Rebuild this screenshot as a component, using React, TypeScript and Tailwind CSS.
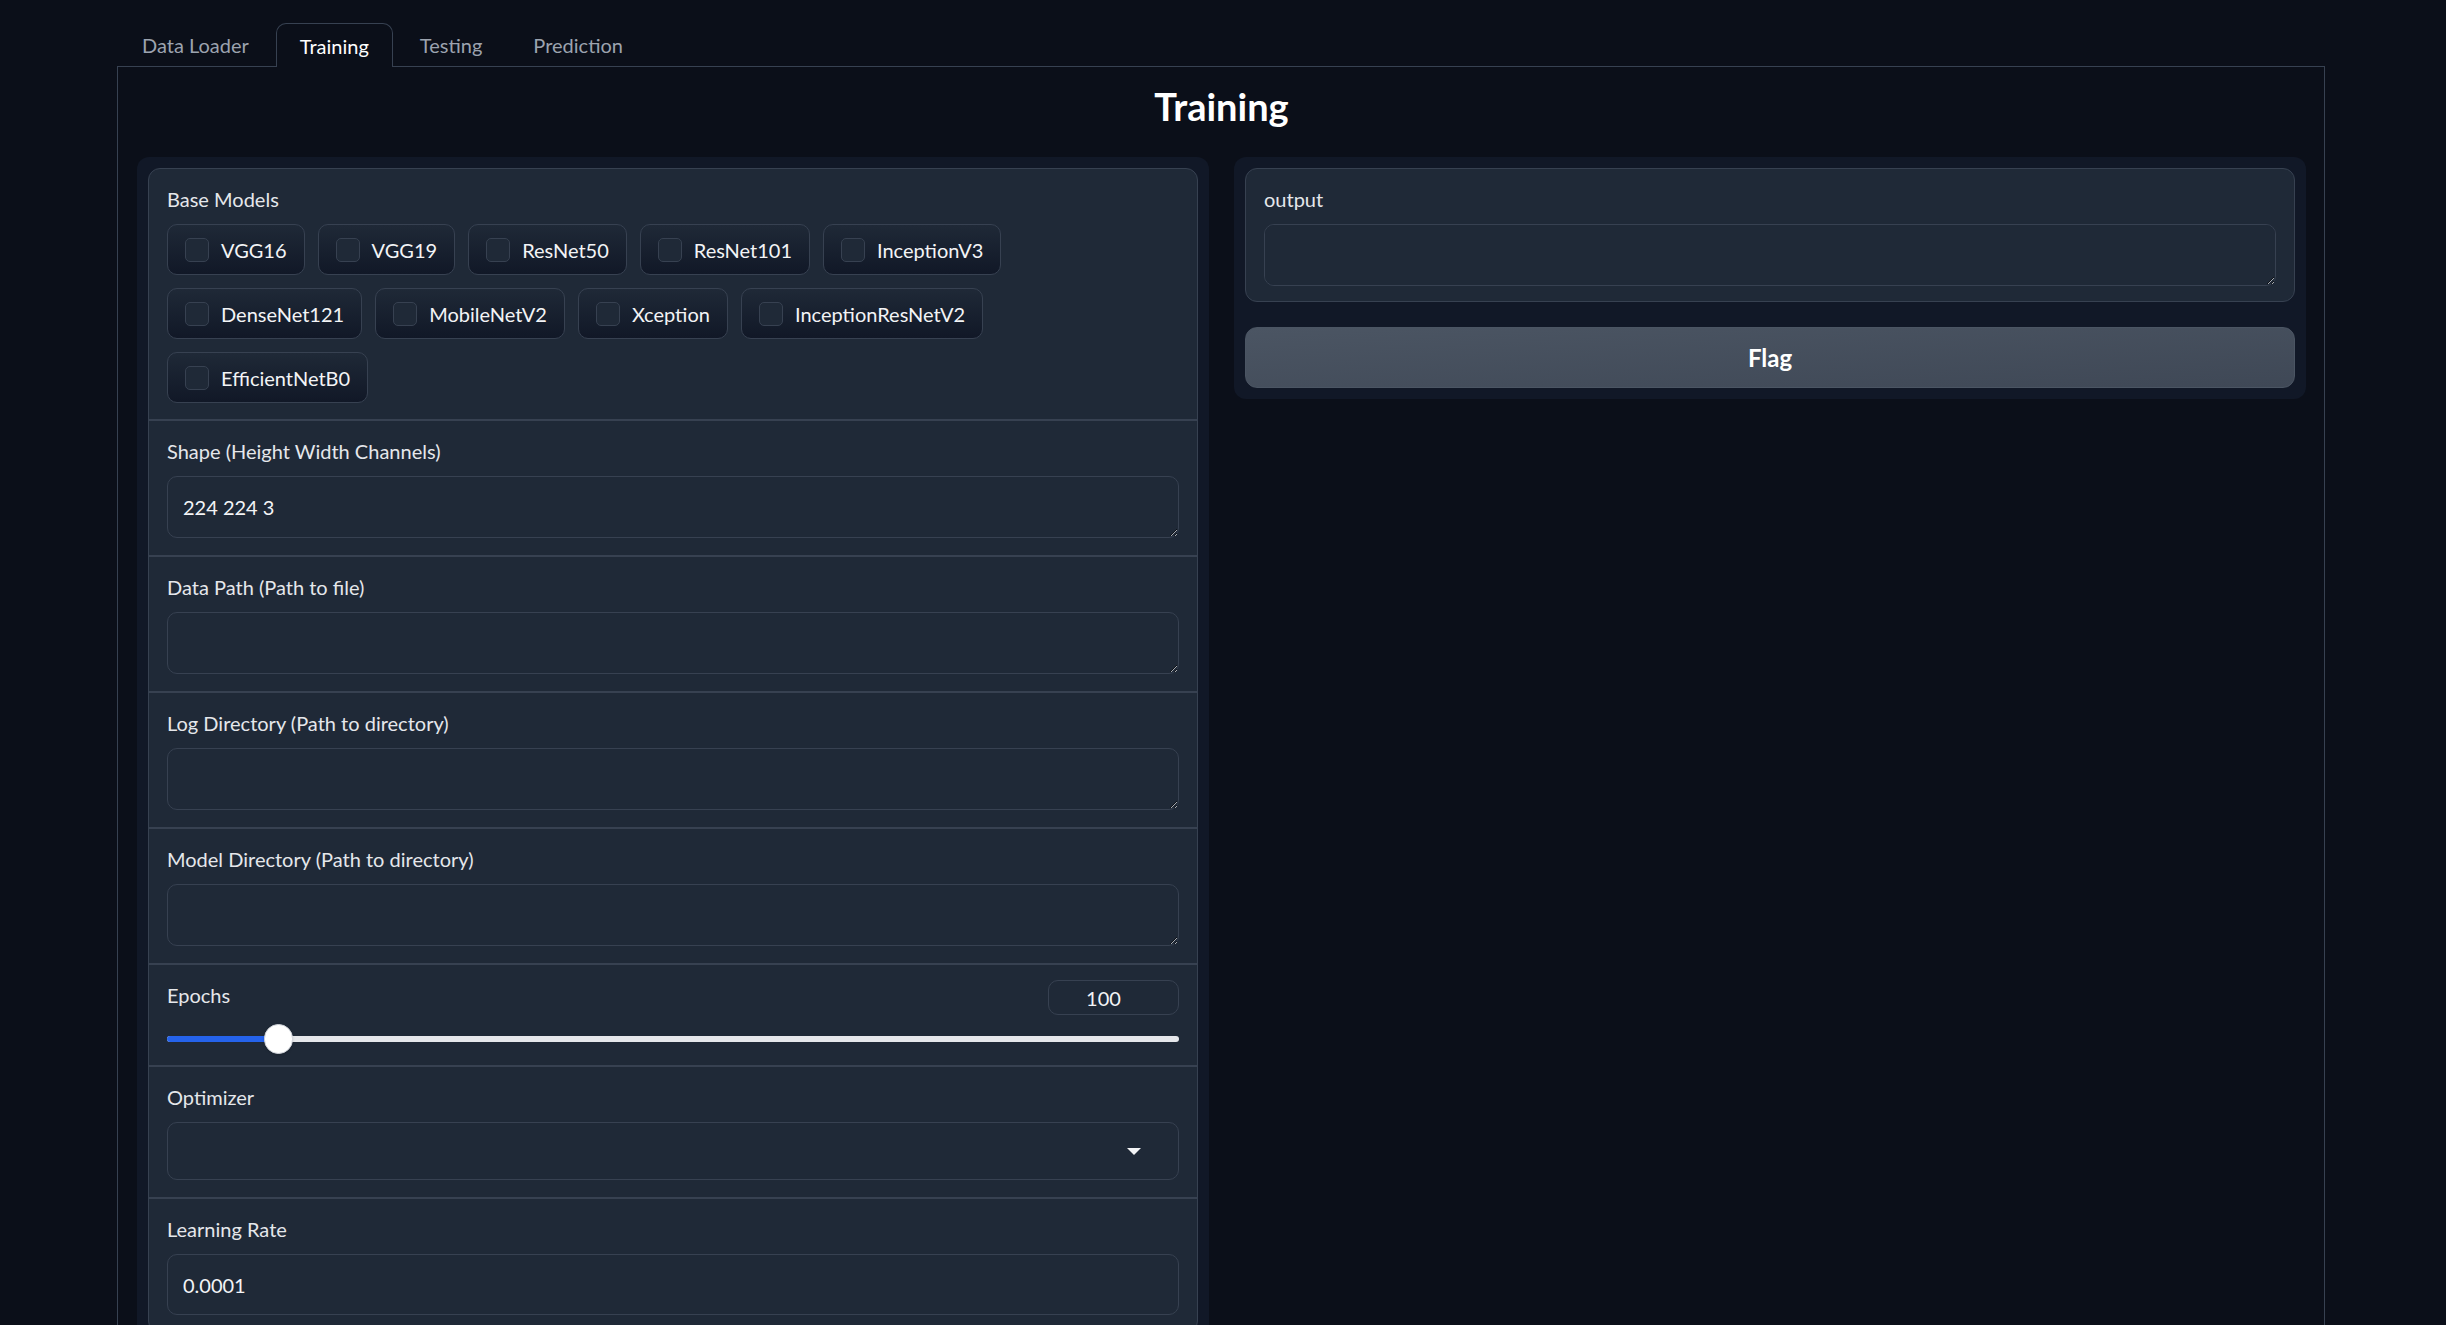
import { useState } from "react";

const models = [
	"VGG16",
	"VGG19",
	"ResNet50",
	"ResNet101",
	"InceptionV3",
	"DenseNet121",
	"MobileNetV2",
	"Xception",
	"InceptionResNetV2",
	"EfficientNetB0",
];

const tabs = ["Data Loader", "Training", "Testing", "Prediction"];

function Label({ children }: { children: React.ReactNode }) {
	return (
		<div className="mb-[10px] text-[20px] leading-[29px] text-[#e5e7eb]">
			{children}
		</div>
	);
}

function Section({
	first,
	children,
}: {
	first?: boolean;
	children: React.ReactNode;
}) {
	return (
		<div
			className={`px-[18px] pt-[16px] pb-[17px] ${first ? "" : "border-t-2 border-[#374151]"}`}
		>
			{children}
		</div>
	);
}

function TextBox({ label, value }: { label: string; value?: string }) {
	return (
		<Section>
			<Label>{label}</Label>
			<textarea
				defaultValue={value}
				className="block h-[62px] w-full resize-y rounded-[10px] border border-[#374151] bg-[#1f2937] px-[15px] py-[16px] text-[20px] leading-[28px] text-[#f3f4f6] outline-none"
			/>
		</Section>
	);
}

export default function App() {
	const [checked, setChecked] = useState<string[]>([]);

	return (
		<div className="min-h-screen bg-[#0b0f19] pt-[23px] font-[Lato,sans-serif] [color-scheme:dark]">
			<div className="ml-[117px] w-[2208px]">
				<nav className="flex gap-[3px] pl-px">
					{tabs.map((t) => (
						<button
							key={t}
							type="button"
							className={
								t === "Training"
									? "relative z-10 -mb-px h-[44px] rounded-t-[10px] border border-b-0 border-[#374151] bg-[#0b0f19] px-[23px] text-[20px] text-white"
									: "h-[43px] border border-transparent px-[23px] text-[20px] text-[#9ca3af]"
							}
						>
							{t}
						</button>
					))}
				</nav>

				<div className="border border-[#374151] pt-[18px] pr-[18px] pl-[19px]">
					<h1 className="text-center text-[38px] leading-[43px] font-bold text-white">
						Training
					</h1>

					<div className="mt-[29px] grid grid-cols-2 items-start gap-[25px]">
						{/* inputs */}
						<div className="rounded-[12px] bg-[#111827] p-[11px]">
							<div className="overflow-hidden rounded-[12px] border border-[#374151] bg-[#1f2937]">
								<div className="px-[18px] pt-[16px] pb-[16px]">
									<Label>Base Models</Label>
									<div className="flex flex-wrap gap-[13px]">
										{models.map((m) => (
											<label
												key={m}
												className="flex h-[51px] cursor-pointer items-center gap-[12px] rounded-[10px] border border-[#374151] bg-linear-to-t from-[#111827] to-[#1f2937] px-[17px] text-[20px] text-[#f3f4f6]"
											>
												<input
													type="checkbox"
													className="peer sr-only"
													checked={checked.includes(m)}
													onChange={() =>
														setChecked((c) =>
															c.includes(m)
																? c.filter((x) => x !== m)
																: [...c, m],
														)
													}
												/>
												<span className="h-[24px] w-[24px] rounded-[5px] border border-[#374151] bg-[#1f2937] peer-checked:bg-[#2563eb]" />
												{m}
											</label>
										))}
									</div>
								</div>

								<TextBox label="Shape (Height Width Channels)" value="224 224 3" />
								<TextBox label="Data Path (Path to file)" />
								<TextBox label="Log Directory (Path to directory)" />
								<TextBox label="Model Directory (Path to directory)" />

								<div className="border-t-2 border-[#374151] px-[18px] pt-[15px] pb-[11px]">
									<div className="flex h-[35px] items-start justify-between">
										<span className="pt-px text-[20px] leading-[29px] text-[#e5e7eb]">
											Epochs
										</span>
										<div className="flex h-[35px] w-[131px] items-center justify-center rounded-[10px] border border-[#374151] pr-[20px] text-[20px] text-[#f3f4f6]">
											100
										</div>
									</div>
									<div className="relative mt-[9px] h-[30px]">
										<div className="absolute top-[12px] right-0 left-0 h-[6px] rounded-full bg-[#e5e7eb]" />
										<div className="absolute top-[12px] left-0 h-[6px] w-[111px] rounded-full bg-[#2563eb]" />
										<div className="absolute top-0 left-[97px] h-[30px] w-[29px] rounded-full border border-[#d1d5db] bg-white shadow" />
									</div>
								</div>

								<Section>
									<Label>Optimizer</Label>
									<div className="flex h-[58px] items-center justify-end rounded-[10px] border border-[#374151] pr-[37px]">
										<svg width="14" height="7" viewBox="0 0 14 7">
											<path d="M0 0h14L7 7z" fill="#f3f4f6" />
										</svg>
									</div>
								</Section>

								<Section>
									<Label>Learning Rate</Label>
									<div className="flex h-[61px] items-center rounded-[10px] border border-[#374151] px-[15px] text-[20px] text-[#f3f4f6]">
										0.0001
									</div>
								</Section>
							</div>
						</div>

						{/* output */}
						<div className="flex flex-col gap-[25px] rounded-[12px] bg-[#111827] p-[11px]">
							<div className="rounded-[12px] border border-[#374151] bg-[#1f2937] px-[18px] pt-[16px] pb-[15px]">
								<Label>output</Label>
								<textarea className="block h-[62px] w-full resize-y rounded-[10px] border border-[#374151] bg-[#1f2937] px-[15px] py-[16px] text-[20px] text-[#f3f4f6] outline-none" />
							</div>
							<button
								type="button"
								className="h-[61px] rounded-[12px] border border-[#4b5563] bg-linear-to-br from-[#4b5563] to-[#3f4856] text-[24px] font-bold text-white"
							>
								Flag
							</button>
						</div>
					</div>
				</div>
			</div>
		</div>
	);
}
